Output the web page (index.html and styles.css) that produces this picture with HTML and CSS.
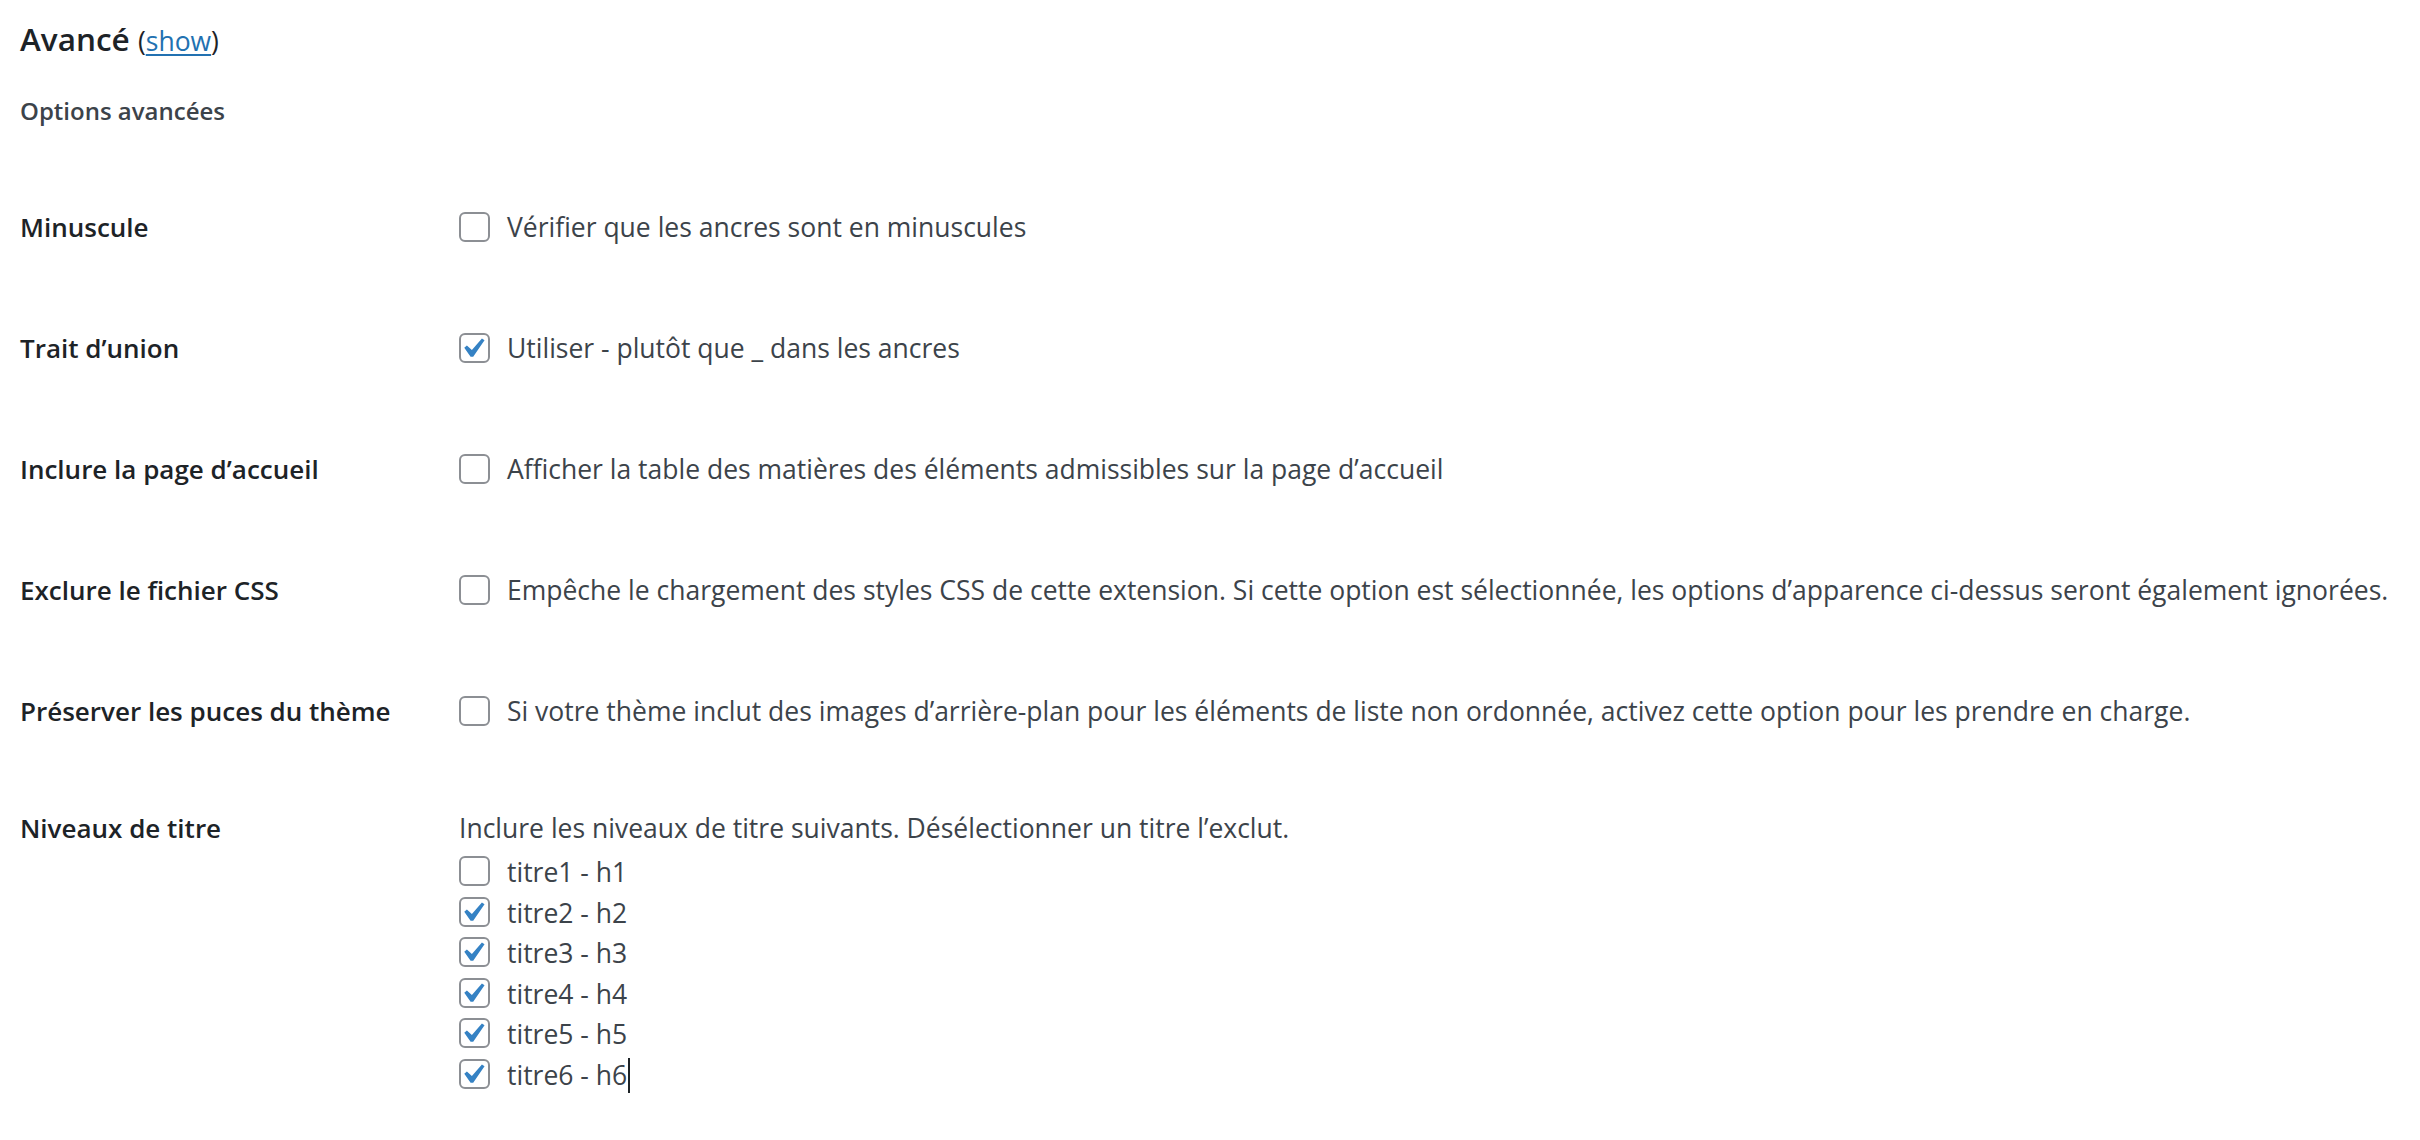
FILE: index.html
```html
<!DOCTYPE html>
<html lang="fr">
<head>
<meta charset="utf-8">
<title>Avancé</title>
<link rel="stylesheet" href="styles.css">
</head>
<body>
<div class="wrap">
  <h2 class="title">Avancé <span class="toggle">(<a href="#">show</a>)</span></h2>
  <p class="section-desc">Options avancées</p>

  <div class="form">
    <div class="row">
      <div class="label">Minuscule</div>
      <div class="field">
        <label class="check"><span class="box"></span><span>Vérifier que les ancres sont en minuscules</span></label>
      </div>
    </div>

    <div class="row">
      <div class="label">Trait d’union</div>
      <div class="field">
        <label class="check"><span class="box checked"><svg viewBox="0 0 20 20"><path d="M14.83 4.89l1.34.94-5.81 8.38H9.02L5.78 9.67l1.34-1.25 2.57 2.4z"/></svg></span><span>Utiliser - plutôt que _ dans les ancres</span></label>
      </div>
    </div>

    <div class="row">
      <div class="label">Inclure la page d’accueil</div>
      <div class="field">
        <label class="check"><span class="box"></span><span>Afficher la table des matières des éléments admissibles sur la page d’accueil</span></label>
      </div>
    </div>

    <div class="row">
      <div class="label">Exclure le fichier CSS</div>
      <div class="field">
        <label class="check"><span class="box"></span><span>Empêche le chargement des styles CSS de cette extension. Si cette option est sélectionnée, les options d’apparence ci-dessus seront également ignorées.</span></label>
      </div>
    </div>

    <div class="row">
      <div class="label">Préserver les puces du thème</div>
      <div class="field">
        <label class="check"><span class="box"></span><span>Si votre thème inclut des images d’arrière-plan pour les éléments de liste non ordonnée, activez cette option pour les prendre en charge.</span></label>
      </div>
    </div>

    <div class="row row-levels">
      <div class="label">Niveaux de titre</div>
      <div class="field">
        <p class="levels-desc">Inclure les niveaux de titre suivants. Désélectionner un titre l’exclut.</p>
        <ul class="levels">
          <li><label class="check item"><span class="box"></span><span>titre1 - h1</span></label></li>
          <li><label class="check item"><span class="box checked"><svg viewBox="0 0 20 20"><path d="M14.83 4.89l1.34.94-5.81 8.38H9.02L5.78 9.67l1.34-1.25 2.57 2.4z"/></svg></span><span>titre2 - h2</span></label></li>
          <li><label class="check item"><span class="box checked"><svg viewBox="0 0 20 20"><path d="M14.83 4.89l1.34.94-5.81 8.38H9.02L5.78 9.67l1.34-1.25 2.57 2.4z"/></svg></span><span>titre3 - h3</span></label></li>
          <li><label class="check item"><span class="box checked"><svg viewBox="0 0 20 20"><path d="M14.83 4.89l1.34.94-5.81 8.38H9.02L5.78 9.67l1.34-1.25 2.57 2.4z"/></svg></span><span>titre4 - h4</span></label></li>
          <li><label class="check item"><span class="box checked"><svg viewBox="0 0 20 20"><path d="M14.83 4.89l1.34.94-5.81 8.38H9.02L5.78 9.67l1.34-1.25 2.57 2.4z"/></svg></span><span>titre5 - h5</span></label></li>
          <li><label class="check item"><span class="box checked"><svg viewBox="0 0 20 20"><path d="M14.83 4.89l1.34.94-5.81 8.38H9.02L5.78 9.67l1.34-1.25 2.57 2.4z"/></svg></span><span>titre6 - h6<span class="caret"></span></span></label></li>
        </ul>
      </div>
    </div>
  </div>
</div>
</body>
</html>
```

FILE: styles.css
```css
html, body {
  margin: 0;
  padding: 0;
  background: #ffffff;
}

body {
  font-family: "Open Sans", "Noto Sans", sans-serif;
  color: #3c434a;
  font-size: 26.5px;
  line-height: 36px;
}

.wrap {
  padding: 17px 20px 0 20px;
}

.title {
  margin: 0;
  font-size: 31.5px;
  line-height: 44px;
  font-weight: 600;
  color: #1d2327;
}

.toggle {
  font-weight: 400;
  font-size: 26.5px;
  color: #1d2327;
}

.toggle a {
  color: #2271b1;
  text-decoration: underline;
  text-underline-offset: 3px;
  text-decoration-thickness: 2px;
}

.section-desc {
  margin: 30px 0 0 0;
  font-size: 24px;
  line-height: 36px;
  font-weight: 600;
  color: #3c434a;
}

.form {
  margin-top: 41px;
}

.row {
  display: grid;
  grid-template-columns: 439px 1fr;
  padding: 39px 0 46px 0;
}

.row-levels {
  padding-top: 35px;
}

.label {
  font-size: 26px;
  line-height: 36px;
  font-weight: 600;
  color: #1d2327;
}

.check {
  display: flex;
  align-items: flex-start;
  white-space: nowrap;
}

.box {
  flex: 0 0 auto;
  box-sizing: border-box;
  width: 31px;
  height: 30px;
  margin-top: 3px;
  margin-right: 17px;
  border: 2px solid #8c8f94;
  border-radius: 6px;
  background: #ffffff;
  display: flex;
}

.box svg {
  width: 39px;
  height: 39px;
  margin: -6px 0 0 -8px;
  fill: #3582c4;
  flex: 0 0 auto;
}

.levels-desc {
  margin: 0 0 6px 0;
}

.levels {
  list-style: none;
  margin: 0;
  padding: 0;
}

.levels li {
  height: 40.5px;
}

.item {
  line-height: 41px;
}

.item .box {
  margin-top: 4px;
}

.caret {
  display: inline-block;
  width: 2px;
  height: 35px;
  background: #1d2327;
  vertical-align: -8px;
  margin-left: 1px;
}
```
